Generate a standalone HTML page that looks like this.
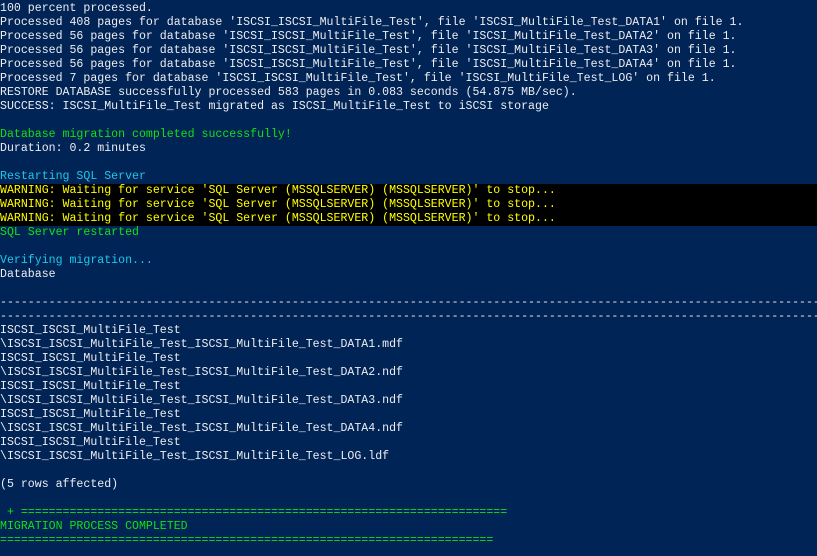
<!DOCTYPE html><html><head><style>
html,body{margin:0;padding:0;background:#012456;width:817px;height:556px;overflow:hidden}
pre{margin:0;padding-top:2px;font-family:"Liberation Mono",monospace;font-size:11.58px;line-height:14px;color:#eeedf0;white-space:pre;overflow:hidden}
.g{color:#13e013}.c{color:#1ec8e8}.w{color:#ffff00;background:#000;display:block}
</style></head><body><pre>100 percent processed.
Processed 408 pages for database 'ISCSI_ISCSI_MultiFile_Test', file 'ISCSI_MultiFile_Test_DATA1' on file 1.
Processed 56 pages for database 'ISCSI_ISCSI_MultiFile_Test', file 'ISCSI_MultiFile_Test_DATA2' on file 1.
Processed 56 pages for database 'ISCSI_ISCSI_MultiFile_Test', file 'ISCSI_MultiFile_Test_DATA3' on file 1.
Processed 56 pages for database 'ISCSI_ISCSI_MultiFile_Test', file 'ISCSI_MultiFile_Test_DATA4' on file 1.
Processed 7 pages for database 'ISCSI_ISCSI_MultiFile_Test', file 'ISCSI_MultiFile_Test_LOG' on file 1.
RESTORE DATABASE successfully processed 583 pages in 0.083 seconds (54.875 MB/sec).
SUCCESS: ISCSI_MultiFile_Test migrated as ISCSI_MultiFile_Test to iSCSI storage

<span class="g">Database migration completed successfully!</span>
Duration: 0.2 minutes

<span class="c">Restarting SQL Server</span>
<span class="w">WARNING: Waiting for service 'SQL Server (MSSQLSERVER) (MSSQLSERVER)' to stop...</span><span class="w">WARNING: Waiting for service 'SQL Server (MSSQLSERVER) (MSSQLSERVER)' to stop...</span><span class="w">WARNING: Waiting for service 'SQL Server (MSSQLSERVER) (MSSQLSERVER)' to stop...</span><span class="g">SQL Server restarted</span>

<span class="c">Verifying migration...</span>
Database

------------------------------------------------------------------------------------------------------------------------
------------------------------------------------------------------------------------------------------------------------
ISCSI_ISCSI_MultiFile_Test
\ISCSI_ISCSI_MultiFile_Test_ISCSI_MultiFile_Test_DATA1.mdf
ISCSI_ISCSI_MultiFile_Test
\ISCSI_ISCSI_MultiFile_Test_ISCSI_MultiFile_Test_DATA2.ndf
ISCSI_ISCSI_MultiFile_Test
\ISCSI_ISCSI_MultiFile_Test_ISCSI_MultiFile_Test_DATA3.ndf
ISCSI_ISCSI_MultiFile_Test
\ISCSI_ISCSI_MultiFile_Test_ISCSI_MultiFile_Test_DATA4.ndf
ISCSI_ISCSI_MultiFile_Test
\ISCSI_ISCSI_MultiFile_Test_ISCSI_MultiFile_Test_LOG.ldf

(5 rows affected)

<span class="g"> + ======================================================================
MIGRATION PROCESS COMPLETED
=======================================================================</span>
</pre></body></html>
